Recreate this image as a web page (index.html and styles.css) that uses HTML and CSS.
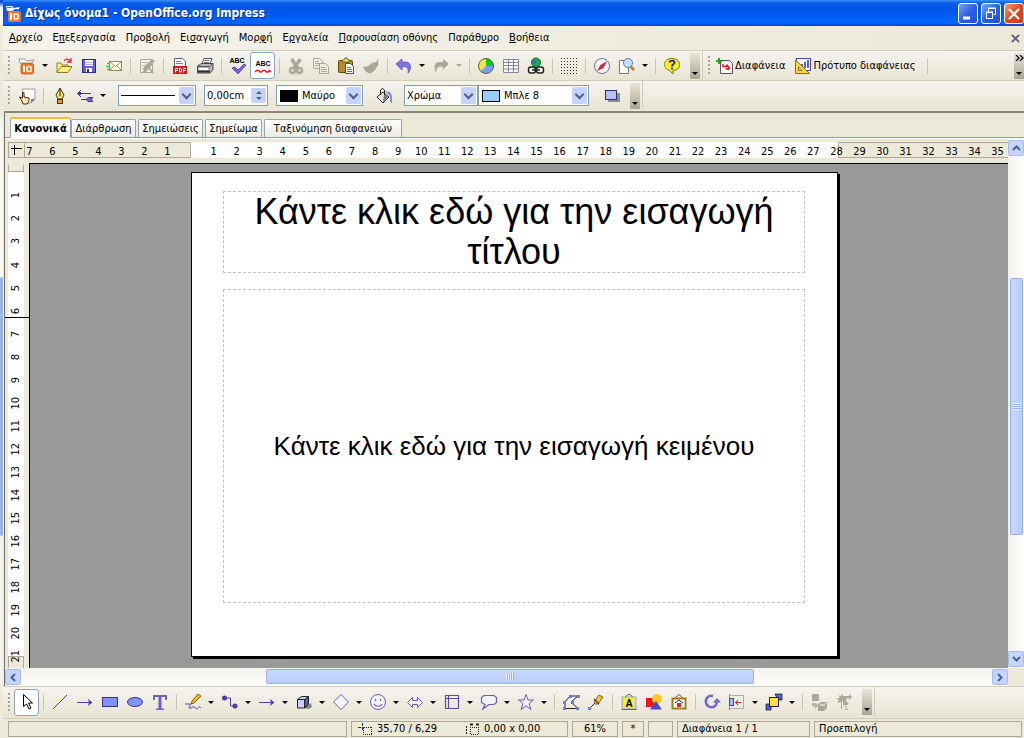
FILE: index.html
```html
<!DOCTYPE html>
<html lang="el">
<head>
<meta charset="utf-8">
<title>Δίχως όνομα1 - OpenOffice.org Impress</title>
<link rel="stylesheet" href="styles.css">
</head>
<body>
<div class="behind"></div>
<div class="window">
  <header class="titlebar">
    <svg class="app-icon" width="17" height="17" viewBox="0 0 17 17"><path d="M1 1h6l2 2 6-1-2 3H9L7 6H2z" fill="#fff"/><path d="M2 2.500h5M9 4.500h4" stroke="#8a7f78"/><rect x="3" y="6" width="13" height="11" rx="2" fill="#f07818"/><path d="M6 8v7" stroke="#fff" stroke-width="2"/><rect x="9" y="9" width="4" height="5" rx="1" stroke="#fff" stroke-width="1.500" fill="none"/></svg>
    <h1 class="caption">Δίχως όνομα1 - OpenOffice.org Impress</h1>
    <button class="cap-btn" aria-label="Ελαχιστοποίηση"><svg width="18" height="19" viewBox="0 0 18 19"><path d="M4 14h7" stroke="#fff" stroke-width="3"/></svg></button>
    <button class="cap-btn" aria-label="Επαναφορά"><svg width="18" height="19" viewBox="0 0 18 19" fill="none" stroke="#fff"><path d="M6.500 7.500V4.500h7v6h-2M6 4h8"/><path d="M4.500 8.500h6v6h-6zM4 8h7"/></svg></button>
    <button class="cap-btn close" aria-label="Κλείσιμο"><svg width="18" height="19" viewBox="0 0 18 19"><path d="M4 5l10 10M14 5L4 15" stroke="#fff" stroke-width="2.200"/></svg></button>
  </header>

  <nav class="menubar">
    <button class="menu"><u>Α</u>ρχείο</button>
    <button class="menu">Ε<u>π</u>εξεργασία</button>
    <button class="menu">Προ<u>β</u>ολή</button>
    <button class="menu">Ει<u>σ</u>αγωγή</button>
    <button class="menu">Μορ<u>φ</u>ή</button>
    <button class="menu">Ε<u>ρ</u>γαλεία</button>
    <button class="menu"><u>Π</u>αρουσίαση οθόνης</button>
    <button class="menu">Παράθ<u>υ</u>ρο</button>
    <button class="menu"><u>Β</u>οήθεια</button>
    <button class="doc-close" aria-label="Κλείσιμο εγγράφου"><svg width="9" height="9" viewBox="0 0 9 9"><path d="M1 1l7 7M8 1l-7 7" stroke="#5b6478" stroke-width="1.800"/></svg></button>
  </nav>

  <div class="toolbar">
    <span class="grip"></span>
    <button class="tool" aria-label="Νέο"><svg width="18" height="18" viewBox="0 0 18 18"><path d="M1 2h6l2 2 7-1-2 3h-4L7 6H2z" fill="#fff" stroke="#8c8480" stroke-width=".8"/><rect x="3" y="6.500" width="12.500" height="10.500" rx="2" fill="#ee7420" stroke="#a85820" stroke-width=".8"/><path d="M6 8.500v6.500" stroke="#fff" stroke-width="2"/><rect x="9" y="9.500" width="4" height="5" rx="1" stroke="#fff" stroke-width="1.500" fill="none"/></svg></button>
    <button class="drop" aria-label="Επιλογές νέου"></button>
    <button class="tool" aria-label="Άνοιγμα"><svg width="18" height="18" viewBox="0 0 18 18"><path d="M2 15V6h4l1 2h6v2" fill="#ffef9a" stroke="#8c7a28"/><path d="M2 15.500l4-6h11l-4 6z" fill="#fff07a" stroke="#8c7a28"/><path d="M9 4c2-3 5-2 6 0M16 1v4h-4" fill="none" stroke="#e02828" stroke-width="1.300"/></svg></button>
    <button class="tool" aria-label="Αποθήκευση"><svg width="18" height="18" viewBox="0 0 18 18"><rect x="2.500" y="2.500" width="13" height="13" fill="#6a62d8" stroke="#32288c"/><rect x="5" y="3" width="8" height="6" fill="#f4f4ff"/><path d="M5 5.500h8M5 7.500h8" stroke="#b8b8d8"/><rect x="6" y="11" width="6" height="4" fill="#fff"/><rect x="7" y="12" width="2" height="3" fill="#32288c"/></svg></button>
    <button class="tool" aria-label="Έγγραφο ως e-mail"><svg width="18" height="18" viewBox="0 0 18 18"><rect x="4.500" y="4.500" width="12" height="9" fill="#fffce0" stroke="#8a886c"/><path d="M5 5l5.500 4.500L16 5M5 13l4-4M16 13l-4-4" fill="none" stroke="#a09c78"/><path d="M2 6.500h3M1 9.500h3M2 12.500h3" stroke="#38c838" stroke-width="1.300"/></svg></button>
    <span class="sep"></span>
    <button class="tool" aria-label="Επεξεργασία αρχείου"><svg width="18" height="18" viewBox="0 0 18 18"><path d="M2.500 2.500h12v13h-12z" fill="#f4f2ea" stroke="#aca899"/><path d="M4 5.500h6M4 8.500h5M4 11.500h2" stroke="#b8b4a8"/><path d="M5 15l1-5 7-7h4l-3 5-6 7z" fill="#aca899"/><path d="M9 8l6 8" stroke="#aca899" stroke-width="2"/></svg></button>
    <span class="sep"></span>
    <button class="tool" aria-label="Εξαγωγή ως PDF"><svg width="18" height="18" viewBox="0 0 18 18"><path d="M3.500 9V1.500h8l3 3V9" fill="#fff" stroke="#5a6070"/><path d="M5 4.500h5M5 6.500h7" stroke="#708090"/><rect x="2" y="9" width="14" height="8" fill="#d81820"/><path d="M4.500 15.500v-4h2v2h-2M8.500 11v4h1.500l.5-1v-2l-.5-.5zM12.500 15.500v-4h2.500M12.500 13.500h2" fill="none" stroke="#fff"/></svg></button>
    <button class="tool" aria-label="Εκτύπωση"><svg width="18" height="18" viewBox="0 0 18 18"><path d="M6 7l2-5.500h8L14 7z" fill="#fff" stroke="#555"/><path d="M8.500 3.500h5M8 5.500h5" stroke="#777"/><path d="M1.500 9l4-2.500H17v6l-3 3.500H1.500z" fill="#b8b8b8" stroke="#444"/><path d="M2 9.500h12l3-3" fill="none" stroke="#555"/><rect x="3" y="11" width="9" height="2" fill="#fff"/><path d="M2 14.500h12" stroke="#333" stroke-width="2"/><path d="M13 11.500h1" stroke="#1cc81c"/></svg></button>
    <span class="sep"></span>
    <button class="tool" aria-label="Ορθογραφικός έλεγχος"><svg width="18" height="18" viewBox="0 0 18 18"><text x="8" y="6" class="abc" text-anchor="middle">ABC</text><path d="M3 11l3-1 3 3 6-6 2 1-8 9z" fill="#7468e0" stroke="#3c30a0" stroke-width=".7"/></svg></button>
    <button class="tool pressed" aria-label="Αυτόματος ορθογραφικός έλεγχος"><svg width="18" height="18" viewBox="0 0 18 18"><text x="9" y="9" class="abc" text-anchor="middle">ABC</text><path d="M1 15l1.500-1.500h2L6 15h1.500L9 13.500h2l1.500 1.500H14l1.500-1.500L17 15" fill="none" stroke="#e01818" stroke-width="1.300"/></svg></button>
    <span class="sep"></span>
    <button class="tool" aria-label="Αποκοπή"><svg width="18" height="18" viewBox="0 0 18 18"><path d="M4.500 2l7 10M13.500 2L6 12" stroke="#aca899" stroke-width="3.500"/><circle cx="5.500" cy="13.500" r="2.500" fill="none" stroke="#aca899" stroke-width="2.500"/><circle cx="12.500" cy="13.500" r="2.500" fill="none" stroke="#aca899" stroke-width="2.500"/></svg></button>
    <button class="tool" aria-label="Αντιγραφή"><svg width="18" height="18" viewBox="0 0 18 18" fill="#f0eee4" stroke="#aca899"><path d="M1.500 1.500h6l3 3v7h-9zM3 4.500h4M3 6.500h5M3 8.500h5"/><path d="M7.500 6.500h6l3 3v7h-9zM9 10.500h4M9 12.500h6M9 14.500h6"/></svg></button>
    <button class="tool" aria-label="Επικόλληση"><svg width="18" height="18" viewBox="0 0 18 18"><rect x="1.500" y="3.500" width="14" height="12" rx="1" fill="#b88a30" stroke="#5c4410"/><path d="M5 5V3h2l1-2h2l1 2h2v2z" fill="#f8e850" stroke="#444" stroke-width=".8"/><path d="M8.500 6.500h5l3 3v7h-8z" fill="#fff" stroke="#5048a8"/><path d="M10 10.500h4M10 12.500h5M10 14.500h5" stroke="#6860c8"/></svg></button>
    <button class="tool" aria-label="Πινέλο μορφής"><svg width="18" height="18" viewBox="0 0 18 18"><path d="M17 1v7l-4 6-4 3-5-2-3-5 5-1 4-3 4-1z" fill="#aca899"/><path d="M9 17l4-3 4-6V2" fill="none" stroke="#fff"/></svg></button>
    <span class="sep"></span>
    <button class="tool" aria-label="Αναίρεση"><svg width="18" height="18" viewBox="0 0 18 18"><path d="M1 7l6-5v3h4c5 0 6 7 2 11 1-5-1-7-6-6v3z" fill="#7c74e0" stroke="#5850c0" stroke-width=".8"/></svg></button>
    <button class="drop" aria-label="Λίστα αναιρέσεων"></button>
    <button class="tool" aria-label="Επανάληψη"><svg width="18" height="18" viewBox="0 0 18 18"><path d="M17 7l-6-5v3H7C2 5 1 12 5 16c-1-5 1-7 6-6v3z" fill="#aca899"/><path d="M17 8l-5 5M6 16l0-3" stroke="#fff"/></svg></button>
    <button class="drop off" aria-label="Λίστα επαναλήψεων"></button>
    <span class="sep"></span>
    <button class="tool" aria-label="Διάγραμμα"><svg width="18" height="18" viewBox="0 0 18 18"><circle cx="9" cy="9" r="7.500" fill="#f8e048"/><path d="M9 9V1.500A7.500 7.500 0 0 1 16.500 9z" fill="#10c818"/><path d="M9 9h7.500A7.500 7.500 0 0 1 3.700 14.300z" fill="#7c9cf8"/><circle cx="9" cy="9" r="7.500" fill="none" stroke="#66603c"/></svg></button>
    <button class="tool" aria-label="Πίνακας"><svg width="18" height="18" viewBox="0 0 18 18"><path d="M1.500 2.500h15v13h-15z" fill="#fff"/><path d="M1.500 2.500h15v13h-15zM1 5.500h16M1 8.500h16M1 12h16M6.500 2v14M11.500 2v14" fill="none" stroke="#8484a0"/></svg></button>
    <button class="tool" aria-label="Υπερσύνδεση"><svg width="18" height="18" viewBox="0 0 18 18"><circle cx="9" cy="5.500" r="4.500" fill="#18b048" stroke="#206038"/><path d="M5 4l3-1 1 2-2 3z" fill="#3860d8"/><rect x="1.500" y="10" width="7" height="6" rx="2.500" fill="#fff" stroke="#222" stroke-width="1.500"/><rect x="9.500" y="10" width="7" height="6" rx="2.500" fill="#fff" stroke="#222" stroke-width="1.500"/><path d="M5 13h8" stroke="#222" stroke-width="1.500"/></svg></button>
    <span class="sep"></span>
    <button class="tool" aria-label="Εμφάνιση πλέγματος"><svg width="18" height="18" viewBox="0 0 18 18"><path d="M1 1.500h17M1 4.500h17M1 7.500h17M1 10.500h17M1 13.500h17M1 16.500h17" stroke="#333" stroke-dasharray="1 2"/></svg></button>
    <span class="sep"></span>
    <button class="tool" aria-label="Πλοηγός"><svg width="18" height="18" viewBox="0 0 18 18"><circle cx="9" cy="9" r="7.500" fill="#f4f6ff" stroke="#70748c"/><path d="M14 4l-3.500 7-3-3z" fill="#e82020"/><path d="M4 14l3.500-6 3 3z" fill="#e82020"/><path d="M10.500 11l-3-3" stroke="#5060c0" stroke-width="1.500"/></svg></button>
    <button class="tool" aria-label="Εστίαση"><svg width="18" height="18" viewBox="0 0 18 18"><path d="M1.500 3.500h9v13h-9z" fill="#fff" stroke="#777"/><path d="M12 9l4 4" stroke="#c87828" stroke-width="2.500"/><circle cx="10" cy="6" r="4.500" fill="#c4e0fc" stroke="#6078b0"/></svg></button>
    <button class="drop" aria-label="Επιλογές εστίασης"></button>
    <span class="sep"></span>
    <button class="tool" aria-label="Βοήθεια"><svg width="18" height="18" viewBox="0 0 18 18"><path d="M9 1.500c10 0 10 12 1 12l0 3.500-4-4C-1 11 0 1.500 9 1.500z" fill="#f8f020" stroke="#7c7420"/><path d="M6.500 5.500C7 3 11.500 3 11.500 5.500c0 2-2.500 1.500-2.500 4M9 10.500v2" fill="none" stroke="#28289c" stroke-width="1.800"/></svg></button>
    <button class="overflow gap" aria-label="Περισσότερα"></button>
    <span class="bar-end"></span>
    <span class="grip"></span>
    <button class="tool labelled"><svg width="18" height="18" viewBox="0 0 18 18"><path d="M4.500 3.500h9l3 3v10h-12z" fill="#fff" stroke="#555"/><path d="M3 1v6M0 4h6" stroke="#18a818" stroke-width="2"/><path d="M7 7v2.500h6M10.500 7.500l3 4-1 1-3-1" fill="none" stroke="#d81818" stroke-width="1.500"/></svg>Διαφάνεια</button>
    <button class="tool labelled"><svg width="18" height="18" viewBox="0 0 18 18"><rect x="2.500" y="1.500" width="14" height="12" fill="#f4f4ff" stroke="#4848a8"/><path d="M8 11V7M11 11V5M14 11V3" stroke="#6060d8" stroke-width="2"/><path d="M1.500 3v13.500h14z" fill="#ffd840" stroke="#84682c"/><path d="M4.500 10v3.500h3.500z" fill="#fff" stroke="#84682c"/></svg>Πρότυπο διαφάνειας</button>
    <span class="sep"></span>
    <button class="overflow last" aria-label="Περισσότερα εργαλεία"><svg width="9" height="6" viewBox="0 0 9 6"><path d="M1 0l3 3-3 3M5 0l3 3-3 3" fill="none" stroke="#000" stroke-width="1.300"/></svg></button>
  </div>

  <div class="toolbar">
    <span class="grip"></span>
    <button class="tool" aria-label="Στυλ"><svg width="18" height="18" viewBox="0 0 18 18"><path d="M4 2h13v10l-4 4H7z" fill="#fafafa" stroke="#888" stroke-width=".8"/><path d="M17 12h-4v4z" fill="#6878b8"/><path d="M4.500 15l-3-5 3 1V5.500h1.500V10l5 1v3l-2 3H5z" fill="#ffe8b0" stroke="#3c2c10"/></svg></button>
    <span class="sep"></span>
    <button class="tool" aria-label="Γραμμή"><svg width="18" height="18" viewBox="0 0 18 18"><path d="M9 1l4 7-2 4H7L5 8z" fill="#f8e070" stroke="#3c3410"/><path d="M9 2v7" stroke="#222"/><rect x="6.500" y="12.500" width="5" height="4" fill="#f09818" stroke="#3c3410"/></svg></button>
    <button class="tool" aria-label="Στυλ βέλους"><svg width="18" height="18" viewBox="0 0 18 18" fill="none" stroke="#44389c"><path d="M1 6.500h14M5 3L1.500 6.500 5 10M16 12.500H5"/><path d="M4 5v3" stroke-width="2"/><path d="M10 12.500l2-2h5l-2 2 2 2h-5z" fill="#7468c8"/></svg></button>
    <button class="drop" aria-label="Επιλογές βέλους"></button>
    <label class="combo w-line"><span class="line-sample"></span><select aria-label="Στυλ γραμμής"><option></option></select><span class="chev"></span></label>
    <label class="combo w-spin"><input type="text" value="0,00cm" aria-label="Πλάτος γραμμής"><span class="spin"></span></label>
    <label class="combo w-color"><span class="swatch black"></span><select aria-label="Χρώμα γραμμής"><option>Μαύρο</option></select><span class="chev"></span></label>
    <button class="tool bucket" aria-label="Περιοχή"><svg width="18" height="18" viewBox="0 0 18 18"><path d="M10 4l5 1 2 4v7l-2-1V9z" fill="#8088e8"/><path d="M8 5l6 5-6 6-6-6z" fill="#e8e8e8" stroke="#222"/><path d="M8 15l5-5-4-3z" fill="#777"/><path d="M5.500 8V3l2-1.500 2 1.500v5" fill="none" stroke="#222"/></svg></button>
    <label class="combo w-fill"><select aria-label="Γέμισμα"><option>Χρώμα</option></select><span class="chev"></span></label>
    <label class="combo w-blue"><span class="swatch blue"></span><select aria-label="Χρώμα γεμίσματος"><option>Μπλε 8</option></select><span class="chev"></span></label>
    <button class="tool shade" aria-label="Σκιά"><svg width="18" height="18" viewBox="0 0 18 18"><path d="M5 6h12v9H5z" fill="#8c8c94"/><rect x="2.500" y="3.500" width="11" height="9" fill="#b8c0f8" stroke="#28306c"/></svg></button>
    <button class="overflow" aria-label="Περισσότερα"></button>
    <span class="bar-end"></span>
  </div>

  <main class="workspace">
    <div class="tabs" role="tablist">
      <button class="tab active" role="tab" aria-selected="true">Κανονικά</button>
      <button class="tab t2" role="tab">Διάρθρωση</button>
      <button class="tab t3" role="tab">Σημειώσεις</button>
      <button class="tab t4" role="tab">Σημείωμα</button>
      <button class="tab t5" role="tab">Ταξινόμηση διαφανειών</button>
    </div>
    <div class="editor">
      <div class="hruler">
        <span class="origin"><svg width="14" height="14" viewBox="0 0 14 14"><path d="M2 5.500h11M5.500 2v10" stroke="#000"/></svg></span>
        <div class="outside left"><div class="ticks before"><span>7</span><span>6</span><span>5</span><span>4</span><span>3</span><span>2</span><span>1</span></div></div>
        <div class="inside"><div class="ticks within"><span>1</span><span>2</span><span>3</span><span>4</span><span>5</span><span>6</span><span>7</span><span>8</span><span>9</span><span>10</span><span>11</span><span>12</span><span>13</span><span>14</span><span>15</span><span>16</span><span>17</span><span>18</span><span>19</span><span>20</span><span>21</span><span>22</span><span>23</span><span>24</span><span>25</span><span>26</span><span>27</span><span>28</span></div></div>
        <div class="outside right"><div class="ticks after"><span>29</span><span>30</span><span>31</span><span>32</span><span>33</span><span>34</span><span>35</span></div></div>
      </div>
      <div class="vruler">
        <div class="v-top"></div>
        <div class="v-page"><div class="v-ticks"><span>1</span><span>2</span><span>3</span><span>4</span><span>5</span><span>6</span><span>7</span><span>8</span><span>9</span><span>10</span><span>11</span><span>12</span><span>13</span><span>14</span><span>15</span><span>16</span><span>17</span><span>18</span><span>19</span><span>20</span><span>21</span></div></div>
        <div class="v-bottom"></div>
        <div class="marker"></div>
      </div>
      <div class="canvas">
        <section class="slide">
          <h2 class="holder title">Κάντε κλικ εδώ για την εισαγωγή τίτλου</h2>
          <p class="holder body">Κάντε κλικ εδώ για την εισαγωγή κειμένου</p>
        </section>
      </div>
      <div class="vscroll">
        <button class="arrow" aria-label="Πάνω"><svg width="9" height="6" viewBox="0 0 9 6"><path d="M1 5l3.500-3.500L8 5"/></svg></button>
        <div class="v-track"><div class="thumb v"></div></div>
        <button class="arrow" aria-label="Κάτω"><svg width="9" height="6" viewBox="0 0 9 6"><path d="M1 1l3.500 3.500L8 1"/></svg></button>
      </div>
      <div class="hscroll">
        <button class="arrow" aria-label="Αριστερά"><svg width="6" height="9" viewBox="0 0 6 9"><path d="M5 1L1.500 4.500 5 8"/></svg></button>
        <div class="h-track"><div class="thumb h"></div></div>
        <button class="arrow" aria-label="Δεξιά"><svg width="6" height="9" viewBox="0 0 6 9"><path d="M1 1l3.500 3.500L1 8"/></svg></button>
      </div>
    </div>
  </main>

  <div class="toolbar drawing">
    <span class="grip"></span>
    <button class="tool pressed" aria-label="Επιλογή"><svg width="18" height="18" viewBox="0 0 18 18"><path d="M5.500 1.500v12l3-2.500 2.500 5 2-1-2.500-5h4z" fill="#fff" stroke="#000"/></svg></button>
    <span class="sep"></span>
    <button class="tool" aria-label="Γραμμή"><svg width="18" height="18" viewBox="0 0 18 18"><path d="M2 16L16 2" stroke="#4c3ca8"/></svg></button>
    <button class="tool" aria-label="Βέλος"><svg width="18" height="18" viewBox="0 0 18 18"><path d="M1 9.500h13" stroke="#4c3ca8"/><path d="M12 6l4.500 3.500L12 13l1-3.500z" fill="#4c3ca8"/></svg></button>
    <button class="tool" aria-label="Ορθογώνιο"><svg width="18" height="18" viewBox="0 0 18 18"><rect x="1.500" y="4.500" width="15" height="9" fill="#8094f8" stroke="#403090"/></svg></button>
    <button class="tool" aria-label="Έλλειψη"><svg width="18" height="18" viewBox="0 0 18 18"><ellipse cx="9" cy="9" rx="7.500" ry="4.500" fill="#8094f8" stroke="#403090"/></svg></button>
    <button class="tool" aria-label="Κείμενο"><svg width="18" height="18" viewBox="0 0 18 18"><path d="M2 2h14v5h-2V4h-3.500v11.500H13V17H5v-1.500h2.500V4H4v3H2z" fill="#6c60c8"/></svg></button>
    <span class="sep"></span>
    <button class="tool" aria-label="Καμπύλη"><svg width="18" height="18" viewBox="0 0 18 18"><path d="M1 11h5c2 1-3 4 0 4s2-2 4-1 3 3 4 1 2-1 3 0" fill="none" stroke="#4c3ca8"/><path d="M7 11l1-3 6-7 3 2-7 7z" fill="#f8b820" stroke="#5c4410" stroke-width=".8"/></svg></button>
    <button class="drop" aria-label="Καμπύλες"></button>
    <button class="tool" aria-label="Σύνδεση"><svg width="18" height="18" viewBox="0 0 18 18"><path d="M4 5h5.500v8H14" fill="none" stroke="#4c3ca8"/><circle cx="3.500" cy="5" r="2.500" fill="#4c3ca8"/><circle cx="14" cy="13" r="2.500" fill="#4c3ca8"/></svg></button>
    <button class="drop" aria-label="Συνδέσεις"></button>
    <button class="tool" aria-label="Γραμμές και βέλη"><svg width="18" height="18" viewBox="0 0 18 18"><path d="M1 9.500h13" stroke="#4c3ca8"/><path d="M12 6l4.500 3.500L12 13l1-3.500z" fill="#4c3ca8"/></svg></button>
    <button class="drop" aria-label="Γραμμές"></button>
    <button class="tool" aria-label="Τρισδιάστατα"><svg width="18" height="18" viewBox="0 0 18 18"><path d="M9 15l7-5 1 4-3 2z" fill="#888"/><path d="M2.500 6.500l4-3h7v7l-4 4.500h-7z" fill="#c8d0ff" stroke="#222"/><path d="M9.500 6.500l4-3v8l-4 3.500z" fill="#505c98" stroke="#222"/><path d="M2.500 6.500h7" stroke="#222"/></svg></button>
    <button class="drop" aria-label="Τρισδιάστατα αντικείμενα"></button>
    <button class="tool" aria-label="Βασικά σχήματα"><svg width="18" height="18" viewBox="0 0 18 18"><path d="M9 1.500L16.500 9 9 16.500 1.500 9z" fill="#f4f2fc" stroke="#6c5cb0"/></svg></button>
    <button class="drop" aria-label="Λίστα βασικών σχημάτων"></button>
    <button class="tool" aria-label="Σύμβολα"><svg width="18" height="18" viewBox="0 0 18 18"><circle cx="9" cy="9" r="7.500" fill="#f4f2fc" stroke="#6c5cb0"/><path d="M6.500 6v2M11.500 6v2M5 11c2 3 6 3 8 0" fill="none" stroke="#6c5cb0" stroke-width="1.200"/></svg></button>
    <button class="drop" aria-label="Λίστα συμβόλων"></button>
    <button class="tool" aria-label="Συμπαγή βέλη"><svg width="18" height="18" viewBox="0 0 18 18"><path d="M1.500 9.500l5-5v3h5v-3l5 5-5 5v-3h-5v3z" fill="#f4f2fc" stroke="#6c5cb0"/></svg></button>
    <button class="drop" aria-label="Λίστα βελών"></button>
    <button class="tool" aria-label="Διάγραμμα ροής"><svg width="18" height="18" viewBox="0 0 18 18"><path d="M2.500 2.500h13v13h-13zM5.500 2v13M2 5.500h13" fill="none" stroke="#5c4ca0" stroke-width="1.200"/></svg></button>
    <button class="drop" aria-label="Λίστα διαγραμμάτων ροής"></button>
    <button class="tool" aria-label="Επεξηγήσεις"><svg width="18" height="18" viewBox="0 0 18 18"><path d="M4 2.500h10l2.500 2v5l-2.500 2H9L3 16l2-4.500-3.500-2v-5z" fill="#f4f2fc" stroke="#6c5cb0" stroke-width="1.200"/></svg></button>
    <button class="drop" aria-label="Λίστα επεξηγήσεων"></button>
    <button class="tool" aria-label="Αστέρια"><svg width="18" height="18" viewBox="0 0 18 18"><path d="M9 1.500l2 5.500h5.500L12 10.500l2 6-5-3.700-5 3.700 2-6L1.500 7H7z" fill="#f4f2fc" stroke="#6c5cb0"/></svg></button>
    <button class="drop" aria-label="Λίστα αστεριών"></button>
    <span class="sep"></span>
    <button class="tool" aria-label="Σημεία"><svg width="18" height="18" viewBox="0 0 18 18"><path d="M8 3L3 9v6.500h13L9 9l7-6z" fill="none" stroke="#222"/><path d="M7 2h3v3H7zM15 2h3v3h-3zM1 8h3v3H1zM9 8h3v3H9zM1 14h3v3H1zM14 14h3v3h-3z" fill="#6878f0"/></svg></button>
    <button class="tool" aria-label="Σημεία συγκόλλησης"><svg width="18" height="18" viewBox="0 0 18 18"><path d="M3 15l5-5" stroke="#222"/><path d="M7 9l5-7 4 2-5 7-3 0z" fill="#f8c838" stroke="#5c4410" stroke-width=".8"/><path d="M7 6l5 5" stroke="#444" stroke-width="1.500"/><path d="M1 14h3v3H1z" fill="#6878f0"/></svg></button>
    <span class="sep"></span>
    <button class="tool" aria-label="Fontwork"><svg width="18" height="18" viewBox="0 0 18 18"><path d="M5 4l4-3 4 3" fill="none" stroke="#555"/><rect x="2" y="4" width="14" height="12" fill="#d8d4c8" stroke="#a8a8b0"/><rect x="4" y="5" width="10" height="10" fill="#f8f020"/><path d="M1.500 16.500h15" stroke="#667"/><text x="9" y="14" class="letter" text-anchor="middle">A</text></svg></button>
    <button class="tool" aria-label="Από αρχείο"><svg width="18" height="18" viewBox="0 0 18 18"><rect x="1" y="5" width="9" height="9" fill="#e81818"/><circle cx="12" cy="6" r="5" fill="#ffc828"/><path d="M11 8l6 8.500H5z" fill="#5048c8"/></svg></button>
    <button class="tool" aria-label="Συλλογή"><svg width="18" height="18" viewBox="0 0 18 18"><path d="M5 5l4-3.500L13 5" fill="none" stroke="#555"/><rect x="2.500" y="5.500" width="13" height="10" fill="#fff" stroke="#a07c18" stroke-width="2"/><path d="M5 10l4-3 4 3" fill="none" stroke="#222"/><path d="M7 10h4v4H7z" fill="#e82020"/></svg></button>
    <span class="sep"></span>
    <button class="tool" aria-label="Περιστροφή"><svg width="18" height="18" viewBox="0 0 18 18"><path d="M10 3C5 2 2 6 3 10s7 6 10 2l1-3" fill="none" stroke="#7468c8" stroke-width="2.500"/><path d="M10 9.500L14 5l4 4.500z" fill="#7468c8"/></svg></button>
    <button class="tool" aria-label="Στοίχιση"><svg width="18" height="18" viewBox="0 0 18 18"><path d="M2 2.500h14M2 15.500h14M15.500 2v14" stroke="#aaa8c0"/><path d="M1.500 1v16" stroke="#18e018"/><rect x="1.500" y="5.500" width="4" height="7" fill="#a8b8ff" stroke="#4048a0"/><path d="M7 9.500h6M10 7L7.500 9.500 10 12" fill="none" stroke="#d82020"/></svg></button>
    <button class="drop" aria-label="Επιλογές στοίχισης"></button>
    <button class="tool" aria-label="Διευθέτηση"><svg width="18" height="18" viewBox="0 0 18 18"><path d="M10 1h7v6h-4zM1 11h5v6H1z" fill="#5060d8" stroke="#222" stroke-width=".8"/><rect x="4.500" y="4.500" width="9" height="9" fill="#ffe040" stroke="#222"/></svg></button>
    <button class="drop" aria-label="Επιλογές διευθέτησης"></button>
    <span class="sep"></span>
    <button class="tool" aria-label="Εξώθηση"><svg width="18" height="18" viewBox="0 0 18 18"><path d="M2 1h7v7H2zM8 11l3-2h6v6l-3 3H8z" fill="#aca899"/><path d="M3 10v2.500h3M5 10l2 2.500L5 15" fill="none" stroke="#aca899" stroke-width="1.500"/><path d="M10 12h4l2-2" fill="none" stroke="#fff"/></svg></button>
    <button class="tool" aria-label="Αλληλεπίδραση"><svg width="18" height="18" viewBox="0 0 18 18"><path d="M7 1l1 2h6V1l3 3-3 3V5h-2l-1 3 3 3-3 1 2 5h-2l-2-4-3 3V9L2 10l2-3-3-2h4L3 2l3 1z" fill="#aca899"/><path d="M7.500 8v6l2-2 2 4" fill="none" stroke="#fff"/></svg></button>
    <button class="overflow gap" aria-label="Περισσότερα"></button>
    <span class="bar-end"></span>
  </div>

  <footer class="status">
    <span class="cell c-msg"></span>
    <span class="cell c-pos"><svg width="15" height="12" viewBox="0 0 15 12"><path d="M0 4.500h8M4.500 0v8" stroke="#2828a8" stroke-dasharray="3 1"/><path d="M5.500 5v6.500h8.500M13.500 4v8M8 4.500h6" fill="none" stroke="#222" stroke-dasharray="1 1"/></svg><span class="coords">35,70 / 6,29</span><svg width="15" height="12" viewBox="0 0 15 12"><path d="M1.500 3v9" stroke="#222" stroke-dasharray="2 1"/><path d="M5.500 4v7.500h8.500M13.500 4v8M5 4.500h9" fill="none" stroke="#222" stroke-dasharray="1 1"/><path d="M5 1.500h3M11 1.500h3" stroke="#222" stroke-width="2"/></svg><span>0,00 x 0,00</span></span>
    <span class="cell c-zoom">61%</span>
    <span class="cell c-mod">*</span>
    <span class="cell c-sig"></span>
    <span class="cell c-slide">Διαφάνεια 1 / 1</span>
    <span class="cell c-tpl">Προεπιλογή</span>
  </footer>
</div>
</body>
</html>
```
FILE: styles.css
```css
* { box-sizing: border-box; }
body {
  margin: 0;
  min-height: 100vh;
  display: flex;
  overflow: hidden;
  background: #ece9d8;
  font: 11px/14px "DejaVu Sans Condensed", "DejaVu Sans", sans-serif;
  color: #000;
}
button, input, select {
  font: inherit;
  color: inherit;
  margin: 0;
  padding: 0;
  border: 0;
  background: none;
}
svg { display: block; flex: none; }
.behind {
  flex: 0 0 3px;
  background: linear-gradient(#0a50d8 0 2px, #fff 8px 24px, #ece9d8 26px 110px, #f8f7f0 130px 277px, #9cb4e4 278px 535px, #f4f2ea 536px 687px, #ece9d8 690px);
}
.window { flex: 1; min-width: 0; display: flex; flex-direction: column; }

/* Title bar */
.titlebar {
  height: 26px;
  display: flex;
  align-items: center;
  gap: 3px;
  padding-left: 2px;
  background: linear-gradient(#3a90ff 0, #0a5ce8 3px, #0055e5 8px, #0058ee 14px, #0066ff 21px, #0060f4 24px, #0038b8 26px);
}
.caption {
  flex: 1;
  margin: 0;
  font: bold 12px/16px "DejaVu Sans Condensed", "DejaVu Sans", sans-serif;
  color: #fff;
  text-shadow: 1px 1px 0 #0a2a80;
}
.cap-btn {
  width: 20px;
  height: 21px;
  border: 1px solid #fff;
  border-radius: 3px;
  background: linear-gradient(135deg, #7ca4f8, #2c60e4 50%, #2050d0);
}
.cap-btn.close { background: linear-gradient(135deg, #f0a080, #e04820 50%, #c83c14); }

/* Menu */
.menubar { height: 24px; display: flex; align-items: center; padding: 0 4px 0 6px; gap: 10px; background: linear-gradient(90deg, #f4f2ea, #ece9d8); }
.menu { line-height: 14px; white-space: nowrap; }
.doc-close { margin-left: auto; }

/* Toolbars */
.toolbar {
  height: 30px;
  display: flex;
  align-items: center;
  padding-left: 2px;
  border-top: 1px solid #d0ccbc;
  background: linear-gradient(#f4f3ee, #e9e5d3);
}
.grip { width: 9px; height: 19px; flex: none; background: repeating-linear-gradient(#a8a494 0 2px, transparent 2px 4px) 3px 0 / 2px 19px no-repeat; }
.tool { width: 25px; height: 27px; flex: none; display: flex; align-items: center; justify-content: center; }
.pressed { border: 1px solid #8aa4bc; border-radius: 3px; background: #fff; }
.drop { width: 12px; height: 25px; flex: none; display: grid; place-items: center; }
.drop::before { content: ""; border: 3px solid transparent; border-top-color: #000; border-bottom: 0; }
.drop.off::before { border-top-color: #aca899; }
.sep { width: 8px; height: 16px; flex: none; background: linear-gradient(#c8c4b4, #c8c4b4) 4px 0 / 1px 16px no-repeat; }
.abc { font: bold 7px "Liberation Sans", sans-serif; }
.letter { font: bold 10px "Liberation Sans", sans-serif; }
.overflow {
  width: 10px;
  height: 26px;
  flex: none;
  display: flex;
  flex-direction: column;
  align-items: center;
  justify-content: flex-end;
  padding-bottom: 4px;
  background: linear-gradient(#e8e5d8, #a8a594);
}
.overflow::after { content: ""; border: 3px solid transparent; border-top-color: #000; border-bottom: 0; }
.overflow.gap { margin-left: 6px; }
.overflow.last { margin-left: auto; justify-content: space-between; padding-top: 2px; }
.bar-end { width: 1px; align-self: stretch; margin: 0 2px; background: #d0ccbc; }
.labelled { width: auto; gap: 1px; padding: 0 2px; margin-right: 5px; white-space: nowrap; }
.combo {
  height: 21px;
  display: flex;
  align-items: center;
  flex: none;
  border: 1px solid #7f9db9;
  background: #fff;
}
.combo select, .combo input { appearance: none; flex: 1; min-width: 0; width: 0; height: 19px; padding: 0 2px; outline: 0; }
.w-line { width: 78px; margin: 0 8px 0 9px; }
.w-spin { width: 64px; margin-right: 8px; }
.w-color { width: 87px; }
.w-fill { width: 74px; }
.w-blue { width: 111px; }
.bucket { margin: 0 8px; }
.shade { margin: 0 6px 0 10px; }
.line-sample { width: 60px; height: 1px; margin-left: 2px; background: #000; }
.swatch { width: 18px; height: 12px; margin: 0 2px 0 3px; border: 1px solid #000; }
.swatch.black { background: #000; }
.swatch.blue { background: #99ccff; }
.chev, .spin {
  width: 15px;
  height: 17px;
  margin-right: 1px;
  flex: none;
  border-radius: 2px;
  background: #c4d4fc;
  display: grid;
  place-items: center;
}
.chev::before { content: ""; width: 5px; height: 5px; margin-bottom: 3px; border: solid #4d6185; border-width: 0 2px 2px 0; transform: rotate(45deg); }
.spin { height: 15px; align-content: center; gap: 3px; }
.spin::before, .spin::after { content: ""; border: 3px solid transparent; }
.spin::before { border-bottom-color: #4d6185; border-top: 0; }
.spin::after { border-top-color: #4d6185; border-bottom: 0; }

/* Workspace */
.workspace {
  flex: 1;
  min-height: 0;
  display: flex;
  flex-direction: column;
  margin: 1px 0 0 1px;
  border-top: 2px solid #8a8778;
  border-left: 1px solid #716f64;
  background: #ece9d8;
}
.tabs { height: 25px; flex: none; display: flex; align-items: flex-end; padding-left: 5px; gap: 2px; border-bottom: 1px solid #919b9c; }
.tab {
  height: 18px;
  border: 1px solid #91a7b4;
  border-bottom: 0;
  border-radius: 2px 2px 0 0;
  background: linear-gradient(#fff, #ecebe4);
  white-space: nowrap;
}
.tab.active { width: 61px; height: 21px; margin: 0 -2px -1px 0; border-top: 2px solid #ffb830; background: #fff; font-weight: bold; }
.t2, .t3 { width: 65px; }
.t4 { width: 57px; }
.t5 { width: 138px; }
.editor {
  flex: 1;
  min-height: 0;
  display: grid;
  grid-template-columns: 24px minmax(0, 1fr) 16px;
  grid-template-rows: 24px minmax(0, 1fr) 18px;
  border-top: 1px solid #fff;
}

/* Rulers */
.hruler { grid-column: 1 / 3; display: flex; padding: 3px 0 5px 3px; overflow: hidden; }
.origin { width: 17px; flex: none; border: 1px solid #aca899; }
.outside { border: 1px solid #aca899; overflow: hidden; }
.outside.left { width: 166px; flex: none; border-left: 0; }
.outside.right { flex: 1; border-right: 0; }
.inside { width: 647px; flex: none; background: #fff; padding: 1px 0; z-index: 1; }
.ticks { display: grid; grid-auto-flow: column; grid-auto-columns: 1fr; line-height: 17px; text-align: center; }
.before { margin: 0 11px 0 -7px; }
.within { margin: 0 -10px 0 11px; }
.after { width: 161px; margin-left: 9px; }
.vruler { display: flex; flex-direction: column; position: relative; padding: 2px 5px 0 3px; }
.v-top { height: 7px; flex: none; border: 1px solid #aca899; border-top: 0; }
.v-page { flex: 0 0 484px; height: 484px; padding-top: 12px; background: #fff; z-index: 1; }
.v-ticks { height: 484px; display: grid; grid-template-rows: repeat(21, 1fr); justify-items: center; align-items: center; }
.v-ticks span { writing-mode: vertical-rl; transform: rotate(180deg); line-height: 16px; }
.v-bottom { flex: 1; border: 1px solid #aca899; border-bottom: 0; }
.marker { position: absolute; left: 0; right: 0; top: 154px; height: 1px; background: #000; z-index: 2; }

/* Slide area */
.canvas { background: #999; border-top: 1px solid #000; border-left: 1px solid #000; padding: 8px 0 0 161px; overflow: hidden; }
.slide {
  width: 647px;
  height: 485px;
  display: flex;
  flex-direction: column;
  gap: 16px;
  padding: 18px 32px 53px 31px;
  border: 1px solid #000;
  background: #fff;
  box-shadow: 2px 2px 0 #000;
}
.holder { margin: 0; border: 1px dashed #c0c0c0; font-family: "Liberation Sans", Arial, sans-serif; font-weight: normal; text-align: center; }
.title { height: 82px; font-size: 36px; line-height: 40px; }
.body { flex: 1; display: grid; place-items: center; font-size: 26px; line-height: 30px; }

/* Scroll bars */
.vscroll { grid-row: 1 / 3; grid-column: 3; display: flex; flex-direction: column; background: linear-gradient(90deg, #f3f1ec, #fefefb); }
.hscroll { grid-column: 1 / 3; display: flex; background: linear-gradient(#f3f1ec, #fefefb); }
.arrow { width: 16px; height: 16px; flex: none; display: grid; place-items: center; margin: 1px 0; border: 1px solid #a8bce8; border-radius: 2px; background: #c6d5fd; }
.arrow path { fill: none; stroke: #4d6185; stroke-width: 2; }
.v-track { flex: 1; padding: 121px 1px 0 2px; display: flex; }
.h-track { flex: 1; padding: 1px 0 1px 245px; display: flex; }
.thumb { border: 1px solid #98b0ec; border-radius: 2px; display: grid; place-items: center; }
.thumb.v { width: 100%; height: 257px; background: linear-gradient(90deg, #cad8fd, #b8cdfb); }
.thumb.h { width: 488px; height: 15px; background: linear-gradient(#cad8fd, #b8cdfb); }
.thumb::before { content: ""; width: 8px; height: 7px; }
.thumb.h::before { background: repeating-linear-gradient(90deg, #eef4fe 0 1px, #8cb0f8 1px 2px); }
.thumb.v::before { background: repeating-linear-gradient(#eef4fe 0 1px, #8cb0f8 1px 2px); }

.drawing { height: 32px; padding-bottom: 1px; }

/* Status bar */
.status { height: 20px; display: flex; gap: 4px; padding: 2px 2px 1px 5px; border-top: 1px solid #d0ccbc; background: #ece9d8; }
.cell { flex: none; display: flex; align-items: center; border: 1px solid #aca899; white-space: nowrap; line-height: 14px; }
.c-msg { width: 339px; }
.c-pos { width: 217px; padding-left: 6px; gap: 4px; }
.coords { width: 84px; }
.c-zoom { width: 46px; justify-content: center; }
.c-mod { width: 22px; justify-content: center; }
.c-sig { width: 25px; }
.c-slide { width: 133px; padding-left: 4px; }
.c-tpl { flex: 1; padding-left: 4px; }
```
